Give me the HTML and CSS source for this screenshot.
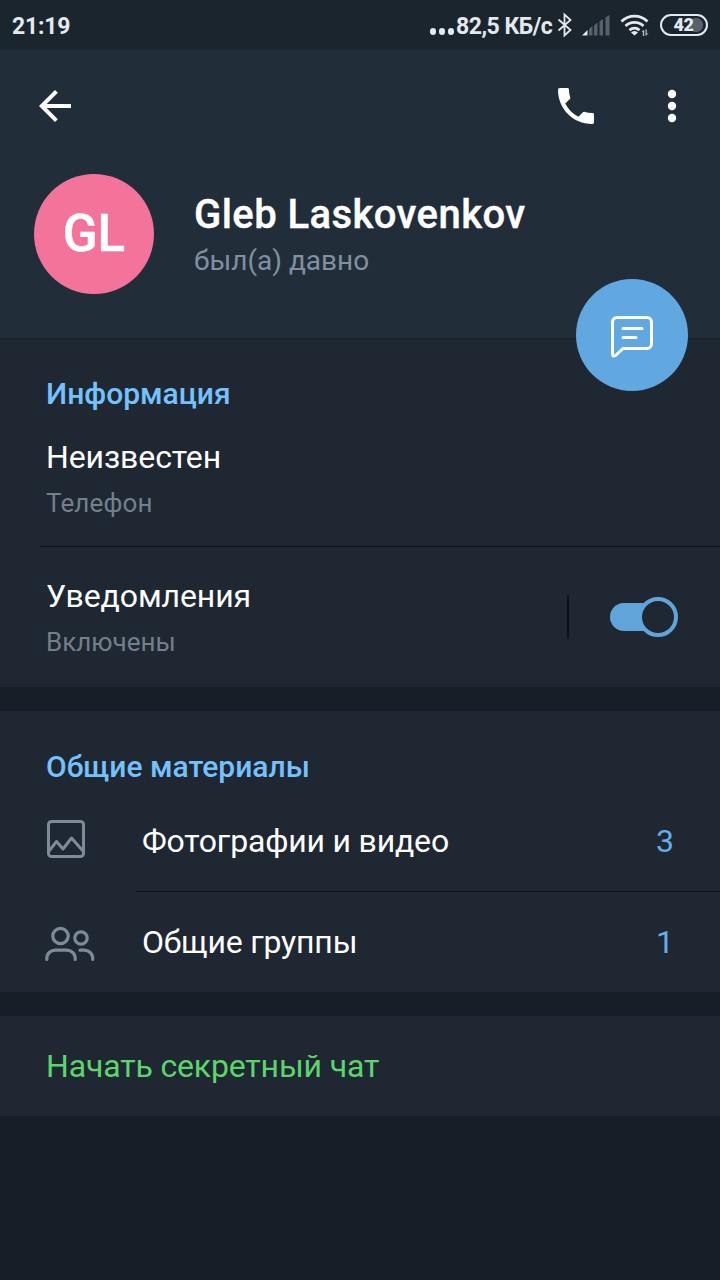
FILE: index.html
```html
<!DOCTYPE html>
<html lang="ru">
<head>
<meta charset="utf-8">
<title>Gleb Laskovenkov</title>
<link rel="stylesheet" href="styles.css">
</head>
<body>
<div class="statusbar">
  <span class="clock">21:19</span>
  <div class="dots"><i></i><i></i><i></i></div>
  <span class="speed">82,5 КБ/с</span>
  <svg class="bluetooth" width="16" height="26" viewBox="0 0 16 26" fill="none" stroke="#e4e9ed" stroke-width="1.800"><path d="M1.500 7.500 13.500 18 7.500 23.500V2.500l6 5.500L1.500 18.500"/></svg>
  <svg class="signal" width="28" height="21" viewBox="0 0 28 21"><path fill="#e4e9ed" d="M0 20.500 5.500 15v5.500z"/><path fill="#56616b" d="M7 14l3.500-3v9.500H7zM12 10.500l3.500-3v13H12zM17.500 6.500 21 4v16.500h-3.500zM23.500 2.500 27.500 0v20.500h-4z"/></svg>
  <svg class="wifi" width="30" height="24" viewBox="0 0 30 24"><g fill="none" stroke="#e4e9ed" stroke-width="2.800"><path d="M1.500 8.500a18.500 18.500 0 0 1 26 0M5.500 13a12.800 12.800 0 0 1 18 0M9.500 17.200a7.300 7.300 0 0 1 10 0"/></g><path fill="#e4e9ed" d="M14.500 22.500 11 19.500a4.600 4.600 0 0 1 7 0z"/><path fill="#b4bcc3" d="m21.500 19 2.700-2.500V23h-1.400v-4zM25.500 16.500h1.300v4h1.700L25.500 23z"/></svg>
  <div class="battery"><b>42</b></div>
</div>
<header class="profile">
  <div class="actions">
    <svg class="back" width="48" height="48" viewBox="0 0 24 24"><path fill="#fff" d="M20 11H7.830l5.590-5.590L12 4l-8 8 8 8 1.410-1.410L7.830 13H20z"/></svg>
    <svg class="call" width="48" height="48" viewBox="0 0 24 24"><path fill="#fff" d="M6.620 10.790c1.440 2.830 3.760 5.140 6.590 6.590l2.200-2.200c.27-.27.67-.36 1.020-.24 1.120.37 2.330.57 3.570.57.550 0 1 .2 1 .6V20c0 .7-.45 1-1 1C10.610 21 3 13.390 3 4c0-.55.300-1 1-1h3.900c.4 0 .6.450.6 1 0 1.250.2 2.450.57 3.570.11.350.3.740-.25 1.020z"/></svg>
    <svg class="more" width="48" height="48" viewBox="0 0 48 48" fill="#fff"><circle cx="24" cy="12" r="4.200"/><circle cx="24" cy="24" r="4.200"/><circle cx="24" cy="36" r="4.200"/></svg>
  </div>
  <div class="person">
    <div class="avatar"><span>GL</span></div>
    <div class="who">
      <h1>Gleb Laskovenkov</h1>
      <p class="seen">был(а) давно</p>
    </div>
  </div>
  <div class="fab">
    <svg width="44" height="44" viewBox="0 0 44 44" fill="none" stroke="#fff" stroke-width="3" stroke-linecap="round" stroke-linejoin="round"><path d="M7 3.500h30a4.500 4.500 0 0 1 4.500 4.500v22a4.500 4.500 0 0 1-4.500 4.500H13L5.500 41.500q-3 1.700-3-1.500V8A4.500 4.500 0 0 1 7 3.500zM13 14.500h19M13 23.500h13"/></svg>
  </div>
</header>
<section class="card info">
  <h2 class="info-title">Информация</h2>
  <div class="phone">
    <p class="label phone-value">Неизвестен</p>
    <p class="sub phone-sub">Телефон</p>
  </div>
  <div class="notify">
    <div class="notify-text">
      <p class="label notify-label">Уведомления</p>
      <p class="sub notify-sub">Включены</p>
    </div>
    <div class="separator"></div>
    <div class="switch"></div>
  </div>
</section>
<section class="card shared">
  <h2 class="shared-title">Общие материалы</h2>
  <div class="row media">
    <svg width="52" height="40" viewBox="0 0 52 40" fill="none" stroke="#7d8b99" stroke-width="3" stroke-linejoin="round"><rect x="3.500" y="1.500" width="35" height="35" rx="3"/><path d="m4 31 7.500-9.500 6.500 7.500 8.500-11L38 31"/></svg>
    <span class="label media-label">Фотографии и видео</span>
    <span class="count">3</span>
  </div>
  <div class="row groups">
    <svg width="52" height="40" viewBox="0 0 52 40" fill="none" stroke="#7d8b99" stroke-width="3.200" stroke-linecap="round"><circle cx="15.500" cy="11" r="7.700"/><circle cx="36" cy="13" r="6.200"/><path d="M1.800 34.500v-1c0-5 3.700-8.300 8.700-8.300h11c5 0 8.700 3.300 8.700 8.300v1M35 25.200h4c5 0 8.700 3.300 8.700 8.300v1"/></svg>
    <span class="label groups-label">Общие группы</span>
    <span class="count">1</span>
  </div>
</section>
<section class="card secret"><span>Начать секретный чат</span></section>
</body>
</html>
```
FILE: styles.css
```css
* { box-sizing: border-box; margin: 0; padding: 0; }
body { width: 720px; height: 1280px; overflow: hidden; background: #161e27; color: #fff; font-family: Roboto, "Noto Sans", sans-serif; }
svg { display: block; flex: none; }
h1, h2, p, span { white-space: nowrap; }

.statusbar { height: 50px; display: flex; align-items: flex-start; padding-left: 12px; background: #1b252e; color: #e4e9ed; font-size: 23px; font-weight: 700; line-height: 54px; }
.clock { width: 417px; letter-spacing: -0.2px; }
.dots { display: flex; gap: 2.500px; width: 27px; padding: 28px 0 0 0.500px; }
.dots i { width: 6.500px; height: 6.500px; border-radius: 50%; background: #e4e9ed; }
.speed { width: 101px; letter-spacing: -0.5px; }
.bluetooth { margin-top: 12px; }
.signal { margin: 15px 0 0 9px; }
.wifi { margin: 13px 0 0 10px; }
.battery { width: 48px; height: 22px; margin: 14px 0 0 10px; border: 2px solid #e4e9ed; border-radius: 11px; display: flex; justify-content: center; background: radial-gradient(circle at 34px 9px, #56616b 6.5px, transparent 7.5px); }
.battery b { font-size: 18px; line-height: 18px; margin-right: 1px; letter-spacing: -0.5px; }

.profile { position: relative; height: 288px; background: #222d3a; }
.actions { display: flex; padding: 32px 24px 0 31px; }
.call { margin-left: auto; }
.more { margin-left: 48px; }
.person { display: flex; padding: 44px 0 0 34px; }
.avatar { width: 120px; height: 120px; border-radius: 50%; background: #f3739a; display: flex; justify-content: center; font-size: 51px; font-weight: 500; line-height: 120px; -webkit-text-stroke: 0.5px #fff; }
.who { margin-left: 40px; padding-top: 17px; }
h1 { font-size: 40px; font-weight: 500; line-height: 48px; letter-spacing: 0.43px; -webkit-text-stroke: 0.4px #fff; }
.seen { font-size: 28px; line-height: 34px; margin-top: 5px; color: #8090a1; }
.fab { position: absolute; right: 32px; top: 229px; width: 112px; height: 112px; border-radius: 50%; background: #61a8e0; padding: 35px 0 0 34px; }

.card { background: #1e2732; }
h2 { font-size: 30px; font-weight: 500; line-height: 36px; color: #75c1fc; }
.label { font-size: 32px; line-height: 40px; letter-spacing: -0.1px; }
.sub { font-size: 26px; line-height: 32px; color: #747f8c; }
.info { height: 349px; padding: 36px 0 0 40px; border-top: 2px solid #1a232d; }
.info-title { margin-left: 6px; }
.phone { height: 135px; padding: 25px 0 0 6px; border-bottom: 1px solid #0d1218; }
.phone-sub, .notify-sub { margin-top: 10px; }
.phone-sub { letter-spacing: 0.15px; }
.notify { display: flex; padding-left: 6px; }
.notify-text { width: 521px; padding-top: 29px; }
.separator { width: 2px; height: 44px; margin-top: 48px; background: #0d1218; }
.switch { position: relative; width: 60px; height: 28px; margin: 56px 0 0 41px; border-radius: 14px; background: #60a4da; }
.switch::after { content: ""; position: absolute; box-sizing: border-box; left: 28px; top: -6px; width: 40px; height: 40px; border-radius: 50%; border: 4px solid #60a4da; background: #1e2732; }

.shared { height: 281px; margin-top: 24px; padding-top: 38px; }
.shared-title { margin-left: 46px; }
.row { display: flex; padding: 0 46px 0 45px; }
.row .label { margin-left: 45px; letter-spacing: -0.18px; }
.count { margin-left: auto; font-size: 32px; line-height: 40px; color: #65aee8; }
.media { height: 107px; padding-top: 36px; background: linear-gradient(#0d1218, #0d1218) 136px 106px / 584px 1px no-repeat; }
.media svg { margin: -1px 0 0 0; }
.groups { padding-top: 30px; }
.groups svg { margin-top: 3px; }
.secret { height: 100px; margin-top: 24px; padding-left: 46px; font-size: 32px; line-height: 100px; letter-spacing: -0.16px; color: #5dd56b; }
```
